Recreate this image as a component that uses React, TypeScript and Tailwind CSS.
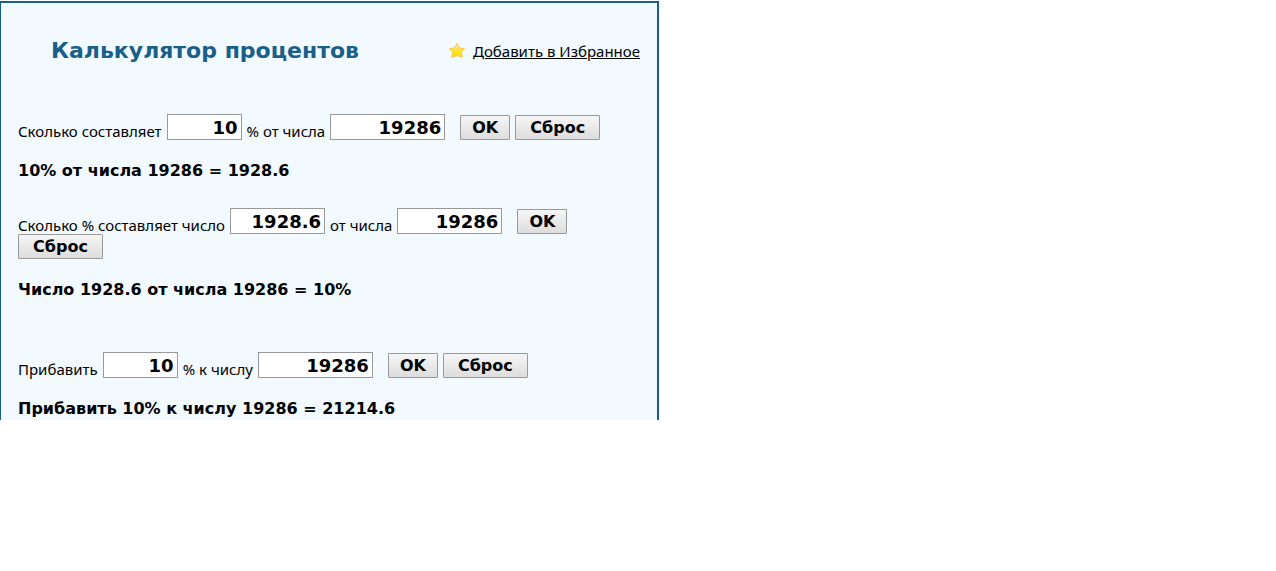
import { useState } from "react"
import type React from "react"

interface Field {
  label: string
  value: string
  width: string
}

interface CalculatorRowProps {
  fields: [Field, Field]
  compute: (a: number, b: number) => string
}

const round = (n: number) => String(Math.round(n * 10000) / 10000)

const buttonClass =
  "h-[25px] rounded-[1px] border border-[#999999] bg-linear-to-b from-[#f6f6f6] to-[#dddddd] text-center text-base leading-5 font-bold"

const CalculatorRow: React.FC<CalculatorRowProps> = ({ fields, compute }) => {
  const [values, setValues] = useState(fields.map((field) => field.value))
  const [result, setResult] = useState(compute(Number(values[0]), Number(values[1])))

  const handleSubmit = (event: React.FormEvent) => {
    event.preventDefault()
    setResult(compute(Number(values[0]), Number(values[1])))
  }

  const handleReset = () => {
    setValues(["", ""])
    setResult("")
  }

  return (
    <form onSubmit={handleSubmit} onReset={handleReset}>
      <div className="flex flex-wrap items-end gap-x-[5px]">
        {fields.map((field, index) => (
          <label
            key={field.label}
            className="flex items-end gap-[5px] font-['Noto_Sans',sans-serif] text-[15px] leading-[18px] whitespace-nowrap"
          >
            {field.label}
            <input
              type="text"
              value={values[index]}
              onChange={(event) => setValues(values.map((v, i) => (i === index ? event.target.value : v)))}
              className={`h-[26px] border border-[#999999] bg-white px-[3px] text-right font-[Verdana,'DejaVu_Sans',sans-serif] text-lg leading-6 font-bold ${field.width}`}
            />
          </label>
        ))}
        <button type="submit" className={`${buttonClass} ml-[10px] w-[50px]`}>
          OK
        </button>
        <button type="reset" className={`${buttonClass} w-[85px]`}>
          Сброс
        </button>
      </div>
      <p className="mt-[21px] min-h-5 text-base leading-5 font-bold">{result}</p>
    </form>
  )
}

const StarIcon = () => (
  <svg viewBox="0 0 16 16" className="h-4 w-4" aria-hidden="true">
    <defs>
      <linearGradient id="star" x1="0" y1="0" x2="0" y2="1">
        <stop offset="0" stopColor="#fff3a6" />
        <stop offset="0.45" stopColor="#ffe044" />
        <stop offset="0.65" stopColor="#ffe900" />
        <stop offset="1" stopColor="#ffd83a" />
      </linearGradient>
    </defs>
    <path
      d="M8 0.6 L10.5 4.9 L15.5 5.6 L12.3 9.4 L13.3 14.2 L8 12.6 L2.7 14.2 L3.7 9.4 L0.5 5.6 L5.5 4.9 Z"
      fill="url(#star)"
      stroke="#f3c44f"
      strokeWidth="1"
      strokeLinejoin="round"
    />
  </svg>
)

export default function App() {
  return (
    <main className="mt-px max-w-[659px] overflow-hidden border-x-2 border-t-2 border-l border-[#1a5e8a] bg-[#f2f9ff] px-[17px] pb-px font-[Verdana,'DejaVu_Sans',sans-serif] text-black">
      <header className="flex items-center justify-between pt-8 pb-[47px] pl-[33px]">
        <h1 className="text-[22px] leading-8 font-bold text-[#1a5e8a]">Калькулятор процентов</h1>
        <a
          href="#favorites"
          className="flex items-center gap-2 font-['Noto_Sans',sans-serif] text-[15px] whitespace-nowrap"
        >
          <StarIcon />
          <span className="underline">Добавить в Избранное</span>
        </a>
      </header>
      <CalculatorRow
        fields={[
          { label: "Сколько составляет", value: "10", width: "w-[75px]" },
          { label: "% от числа", value: "19286", width: "w-[115px]" },
        ]}
        compute={(a, b) => `${a}% от числа ${b} = ${round((b * a) / 100)}`}
      />
      <div className="mt-[27px] mb-[52px]">
        <CalculatorRow
          fields={[
            { label: "Сколько % составляет число", value: "1928.6", width: "w-[95px]" },
            { label: "от числа", value: "19286", width: "w-[105px]" },
          ]}
          compute={(a, b) => `Число ${a} от числа ${b} = ${round((a / b) * 100)}%`}
        />
      </div>
      <CalculatorRow
        fields={[
          { label: "Прибавить", value: "10", width: "w-[75px]" },
          { label: "% к числу", value: "19286", width: "w-[115px]" },
        ]}
        compute={(a, b) => `Прибавить ${a}% к числу ${b} = ${round(b + (b * a) / 100)}`}
      />
    </main>
  )
}
